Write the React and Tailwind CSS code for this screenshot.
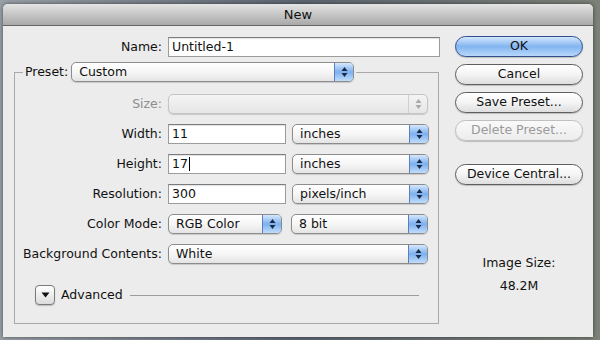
import React from "react";

const font = { fontFamily: '"DejaVu Sans", "Liberation Sans", sans-serif' };

const Arrows = ({ disabled }) => (
  <svg width="7" height="12" viewBox="0 0 7 12">
    <path d="M3.5 1 L6.5 5 L0.5 5 Z" fill={disabled ? "#a8a8a8" : "#1d2a44"} />
    <path d="M3.5 11 L6.5 7 L0.5 7 Z" fill={disabled ? "#a8a8a8" : "#1d2a44"} />
  </svg>
);

const Popup = ({ value, width, disabled, className = "" }) => (
  <div
    className={`h-[20px] flex items-stretch rounded-[5px] border shadow-[0_1px_1px_rgba(0,0,0,0.15)] ${
      disabled
        ? "border-[#c4c4c4] bg-linear-to-b from-[#f4f4f4] to-[#e6e6e6]"
        : "border-[#8c8c8c] bg-linear-to-b from-white via-[#f6f6f6] to-[#e4e4e4]"
    } ${className}`}
    style={{ width }}
  >
    <span className="flex-1 pl-[7px] flex items-center text-[12.5px] text-[#111] leading-none">
      {value}
    </span>
    <span
      className={`w-[19px] flex items-center justify-center rounded-r-[4px] border-l ${
        disabled
          ? "border-[#d0d0d0]"
          : "border-[#5d7fb8] bg-linear-to-b from-[#d6e8fd] via-[#7cb0f0] to-[#c0dcfb]"
      }`}
    >
      <Arrows disabled={disabled} />
    </span>
  </div>
);

const TextBox = ({ value, width, caret }) => (
  <div
    className="h-[20px] flex items-center bg-white border border-[#9c9c9c] border-t-[#7c7c7c] pl-[3px] text-[12.5px] text-[#111] leading-none shadow-[inset_0_1px_1px_rgba(0,0,0,0.12)]"
    style={{ width }}
  >
    {value}
    {caret && <span className="w-[1px] h-[14px] bg-black ml-[1px]" />}
  </div>
);

const AquaButton = ({ children, primary, disabled, className = "" }) => (
  <div
    className={`w-[128px] h-[21px] rounded-full border flex items-center justify-center text-[12.5px] leading-none shadow-[0_1px_1px_rgba(0,0,0,0.2)] ${
      primary
        ? "border-[#2f4f8f] bg-linear-to-b from-[#d4e7fc] via-[#82b5f0] to-[#b8d8fa] text-[#111]"
        : disabled
        ? "border-[#c0c0c0] bg-linear-to-b from-[#fafafa] to-[#ececec] text-[#9a9a9a]"
        : "border-[#5e5e5e] bg-linear-to-b from-white via-[#f4f4f4] to-[#dedede] text-[#111]"
    } ${className}`}
  >
    {children}
  </div>
);

const Row = ({ label, disabled, children }) => (
  <div className="flex items-center gap-[6px]">
    <span
      className={`w-[147px] text-right text-[12.5px] leading-none ${
        disabled ? "text-[#8e8e8e]" : "text-[#111]"
      }`}
    >
      {label}
    </span>
    {children}
  </div>
);

export default function App() {
  return (
    <div
      className="w-[600px] h-[340px] overflow-hidden bg-linear-to-r from-[#9aa0a8] via-[#5d6672] to-[#7d8278] pt-[4px] pl-[3px]"
      style={font}
    >
      <div className="w-[590px] h-[333px] bg-[#ececec] rounded-t-[5px] shadow-[0_0_4px_rgba(0,0,0,0.5)] flex flex-col">
        {/* Title bar */}
        <div className="h-[22px] rounded-t-[5px] border-b border-[#656565] bg-linear-to-b from-[#e4e4e4] to-[#a9a9a9] flex items-center justify-center text-[13px] text-[#111]">
          New
        </div>

        <div className="flex flex-1">
          {/* Left column */}
          <div className="pl-[11px] pt-[11px] flex flex-col">
            <div className="flex items-center gap-[6px]">
              <span className="w-[148px] text-right text-[12.5px] text-[#111] leading-none">
                Name:
              </span>
              <TextBox value="Untitled-1" width={272} />
            </div>

            <fieldset className="mt-[5px] w-[425px] border border-[#a9a9a9] pb-[18px]">
              <legend className="ml-[8px] px-[2px]">
                <div className="flex items-center gap-[3px]">
                  <span className="text-[12.5px] text-[#111] leading-none">Preset:</span>
                  <Popup value="Custom" width={283} />
                </div>
              </legend>

              <div className="pt-[12px] flex flex-col gap-[10px]">
                <Row label="Size:" disabled>
                  <Popup value="" width={260} disabled />
                </Row>
                <Row label="Width:">
                  <TextBox value="11" width={118} />
                  <Popup value="inches" width={137} />
                </Row>
                <Row label="Height:">
                  <TextBox value="17" width={118} caret />
                  <Popup value="inches" width={137} />
                </Row>
                <Row label="Resolution:">
                  <TextBox value="300" width={118} />
                  <Popup value="pixels/inch" width={137} />
                </Row>
                <Row label="Color Mode:">
                  <Popup value="RGB Color" width={114} />
                  <Popup value="8 bit" width={137} className="ml-[3px]" />
                </Row>
                <Row label="Background Contents:">
                  <Popup value="White" width={260} />
                </Row>

                <div className="mt-[11px] flex items-center pl-[20px] pr-[19px]">
                  <div className="w-[20px] h-[20px] rounded-[4px] border border-[#7a7a7a] bg-linear-to-b from-white to-[#dcdcdc] flex items-center justify-center shadow-[0_1px_1px_rgba(0,0,0,0.2)]">
                    <svg width="9" height="6" viewBox="0 0 9 6">
                      <path d="M0.5 0.5 L8.5 0.5 L4.5 5.5 Z" fill="#111" />
                    </svg>
                  </div>
                  <span className="ml-[6px] text-[12.5px] text-[#111] leading-none">Advanced</span>
                  <span className="ml-[7px] flex-1 h-[1px] bg-[#9c9c9c]" />
                </div>
              </div>
            </fieldset>
          </div>

          {/* Right column */}
          <div className="ml-[15px] pt-[10px] flex flex-col items-center w-[128px]">
            <AquaButton primary>OK</AquaButton>
            <AquaButton className="mt-[7px]">Cancel</AquaButton>
            <AquaButton className="mt-[7px]">Save Preset...</AquaButton>
            <AquaButton className="mt-[7px]" disabled>
              Delete Preset...
            </AquaButton>
            <AquaButton className="mt-[23px]">Device Central...</AquaButton>
            <span className="mt-[72px] text-[12.5px] text-[#111] leading-none">Image Size:</span>
            <span className="mt-[10px] text-[12.5px] text-[#111] leading-none">48.2M</span>
          </div>
        </div>
      </div>
    </div>
  );
}
